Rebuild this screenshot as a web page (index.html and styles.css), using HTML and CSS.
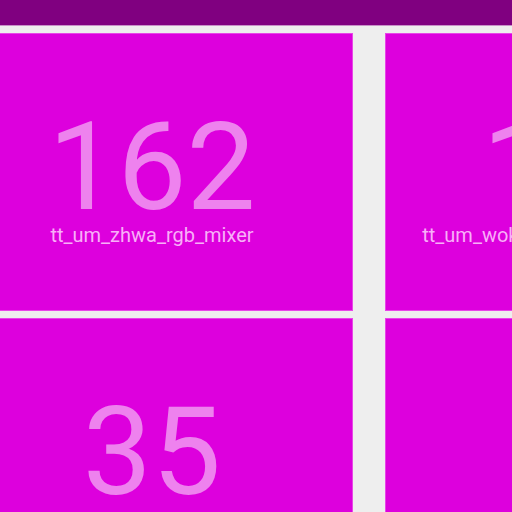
FILE: index.html
```html
<!DOCTYPE html>
<html>
<head>
<meta charset="utf-8">
<link rel="stylesheet" href="styles.css">
</head>
<body>
<header class="topbar"></header>
<main class="grid">
  <div class="tile"><div class="count">162</div><div class="label">tt_um_zhwa_rgb_mixer</div></div>
  <div class="tile"><div class="count">128</div><div class="label">tt_um_wokwi_376553022662786049</div></div>
  <div class="tile"><div class="count">35</div><div class="label">tt_um_zhwa_rgb_clock</div></div>
  <div class="tile"><div class="count">12</div><div class="label">tt_um_example</div></div>
</main>
</body>
</html>
```
FILE: styles.css
```css
html, body {
  margin: 0;
  padding: 0;
  background: #eeeeee;
  overflow: hidden;
  font-family: Roboto, "Liberation Sans", sans-serif;
}
.topbar {
  height: 26px;
  background: #800080;
  border-bottom: 1px solid #c890c8;
  box-sizing: border-box;
}
.grid {
  display: grid;
  grid-template-columns: 402px 402px;
  grid-auto-rows: 278px;
  column-gap: 32px;
  row-gap: 7px;
  padding-top: 7px;
  margin-left: -49px;
  width: 900px;
}
.tile {
  background: #dd00dd;
  border: 1px solid #e845e8;
  box-sizing: border-box;
  display: flex;
  flex-direction: column;
  align-items: center;
  padding-top: 76px;
  color: #ee82ee;
  white-space: nowrap;
}
.count {
  font-size: 123px;
  line-height: 114px;
}
.label {
  font-size: 20px;
  line-height: 22px;
  color: #f8b0f8;
}
```
